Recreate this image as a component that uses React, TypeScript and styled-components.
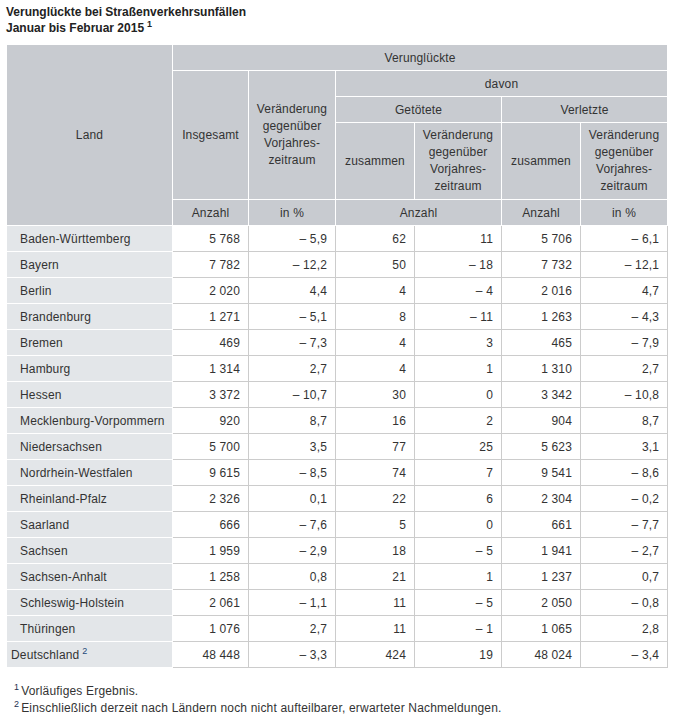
import React from "react";
import styled, { createGlobalStyle } from "styled-components";

const Global = createGlobalStyle`
  html, body { margin: 0; padding: 0; background: #fff; }
  body { font-family: "Liberation Sans", Arial, sans-serif; font-size: 12px; color: #333; }
`;

const Page = styled.div`
  padding: 4px 8px 0 6px;
  width: 661px;
`;

const Title = styled.h1`
  margin: 0 0 8px 0;
  font-size: 12px;
  line-height: 16px;
  font-weight: bold;
  color: #222;
`;

const Sup = styled.sup<{ $blue?: boolean }>`
  font-size: 9px;
  line-height: 0;
  vertical-align: 5px;
  margin-left: 3px;
  color: ${(p) => (p.$blue ? "#1e4a7a" : "inherit")};
`;

const Table = styled.table`
  border-collapse: collapse;
  table-layout: fixed;
  width: 661px;
  letter-spacing: 0.15px;
`;

const Th = styled.th<{ $tall?: boolean }>`
  background: #c8cbd0;
  border: 1px solid #fff;
  font-weight: normal;
  text-align: center;
  color: #333;
  line-height: 17px;
  padding: ${(p) => (p.$tall ? "4px 2px" : "4px 2px 3px")};
  height: ${(p) => (p.$tall ? "auto" : "18px")};
`;

const LandCell = styled.td<{ $total?: boolean }>`
  background: #e3e6e9;
  border: 1px solid #fff;
  text-align: left;
  padding: 0 0 0 ${(p) => (p.$total ? "4px" : "13px")};
  height: 25px;
  white-space: nowrap;
`;

const NumCell = styled.td`
  background: #fff;
  border: 1px solid #ccc;
  text-align: right;
  padding: 0 8px 0 0;
  height: 25px;
  white-space: nowrap;
`;

const Notes = styled.div`
  margin-top: 15px;
  padding-left: 8px;
  line-height: 17px;
  letter-spacing: 0.18px;
`;

const Note = styled.div``;

const NoteSup = styled.sup`
  font-size: 9px;
  line-height: 0;
  vertical-align: 5px;
  margin-right: 2px;
  color: #1e3050;
`;

const rows: [string, string, string, string, string, string, string][] = [
  ["Baden-Württemberg", "5 768", "– 5,9", "62", "11", "5 706", "– 6,1"],
  ["Bayern", "7 782", "– 12,2", "50", "– 18", "7 732", "– 12,1"],
  ["Berlin", "2 020", "4,4", "4", "– 4", "2 016", "4,7"],
  ["Brandenburg", "1 271", "– 5,1", "8", "– 11", "1 263", "– 4,3"],
  ["Bremen", "469", "– 7,3", "4", "3", "465", "– 7,9"],
  ["Hamburg", "1 314", "2,7", "4", "1", "1 310", "2,7"],
  ["Hessen", "3 372", "– 10,7", "30", "0", "3 342", "– 10,8"],
  ["Mecklenburg-Vorpommern", "920", "8,7", "16", "2", "904", "8,7"],
  ["Niedersachsen", "5 700", "3,5", "77", "25", "5 623", "3,1"],
  ["Nordrhein-Westfalen", "9 615", "– 8,5", "74", "7", "9 541", "– 8,6"],
  ["Rheinland-Pfalz", "2 326", "0,1", "22", "6", "2 304", "– 0,2"],
  ["Saarland", "666", "– 7,6", "5", "0", "661", "– 7,7"],
  ["Sachsen", "1 959", "– 2,9", "18", "– 5", "1 941", "– 2,7"],
  ["Sachsen-Anhalt", "1 258", "0,8", "21", "1", "1 237", "0,7"],
  ["Schleswig-Holstein", "2 061", "– 1,1", "11", "– 5", "2 050", "– 0,8"],
  ["Thüringen", "1 076", "2,7", "11", "– 1", "1 065", "2,8"],
];

const total = ["48 448", "– 3,3", "424", "19", "48 024", "– 3,4"];

const Change = () => (
  <>
    Veränderung
    <br />
    gegenüber
    <br />
    Vorjahres-
    <br />
    zeitraum
  </>
);

const nb = (s: string) => s.replace(/ /g, "\u00a0");

export default function App() {
  return (
    <Page>
      <Global />
      <Title>
        Verunglückte bei Straßenverkehrsunfällen
        <br />
        Januar bis Februar 2015<Sup>1</Sup>
      </Title>
      <Table>
        <colgroup>
          <col style={{ width: 166 }} />
          <col style={{ width: 76 }} />
          <col style={{ width: 87 }} />
          <col style={{ width: 79 }} />
          <col style={{ width: 87 }} />
          <col style={{ width: 79 }} />
          <col style={{ width: 87 }} />
        </colgroup>
        <thead>
          <tr>
            <Th rowSpan={5}>Land</Th>
            <Th colSpan={6}>Verunglückte</Th>
          </tr>
          <tr>
            <Th rowSpan={3}>Insgesamt</Th>
            <Th rowSpan={3} $tall>
              <Change />
            </Th>
            <Th colSpan={4}>davon</Th>
          </tr>
          <tr>
            <Th colSpan={2}>Getötete</Th>
            <Th colSpan={2}>Verletzte</Th>
          </tr>
          <tr>
            <Th $tall>zusammen</Th>
            <Th $tall>
              <Change />
            </Th>
            <Th $tall>zusammen</Th>
            <Th $tall>
              <Change />
            </Th>
          </tr>
          <tr>
            <Th>Anzahl</Th>
            <Th>in %</Th>
            <Th colSpan={2}>Anzahl</Th>
            <Th>Anzahl</Th>
            <Th>in %</Th>
          </tr>
        </thead>
        <tbody>
          {rows.map((r) => (
            <tr key={r[0]}>
              <LandCell>{r[0]}</LandCell>
              {r.slice(1).map((v, i) => (
                <NumCell key={i}>{nb(v)}</NumCell>
              ))}
            </tr>
          ))}
          <tr>
            <LandCell $total>
              Deutschland<Sup $blue>2</Sup>
            </LandCell>
            {total.map((v, i) => (
              <NumCell key={i}>{nb(v)}</NumCell>
            ))}
          </tr>
        </tbody>
      </Table>
      <Notes>
        <Note>
          <NoteSup>1</NoteSup>Vorläufiges Ergebnis.
        </Note>
        <Note>
          <NoteSup>2</NoteSup>Einschließlich derzeit nach Ländern noch nicht aufteilbarer, erwarteter Nachmeldungen.
        </Note>
      </Notes>
    </Page>
  );
}
